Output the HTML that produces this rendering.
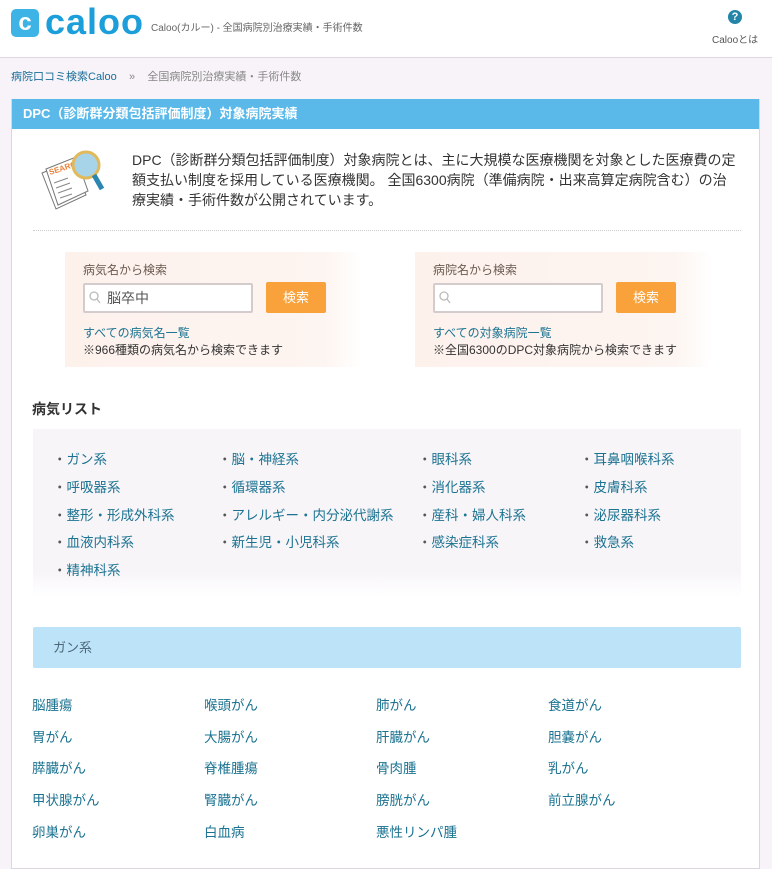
<!DOCTYPE html>
<html><head><meta charset="utf-8">
<style>
*{margin:0;padding:0;box-sizing:border-box}
body{width:772px;height:856px;overflow:hidden;background:#f7f3f8;font-family:"Liberation Sans","Noto Sans CJK JP",sans-serif;color:#333;position:relative}
a{color:#1c7391;text-decoration:none}
.hdr{position:absolute;left:0;top:0;width:772px;height:58px;background:#fff;border-bottom:1px solid #e0d8e0}
.logo{position:absolute;left:11px;top:9px;width:28px;height:28px;background:#3db3e6;border-radius:5px;color:#fff;font:bold 24px/28px "Liberation Sans",sans-serif;text-align:center}
.logot{position:absolute;left:45px;top:2px;font:bold 36px/40px "Liberation Sans",sans-serif;color:#1b9ed9;letter-spacing:1px}
.tag{position:absolute;left:151px;top:19px;font-size:10px;color:#666}
.help{position:absolute;left:728px;top:10px;width:14px;height:14px;border-radius:50%;background:#2386a8;color:#fff;font:bold 11px/14px sans-serif;text-align:center}
.helpt{position:absolute;left:712px;top:31px;font-size:10px;color:#555}
.bc{position:absolute;left:11px;top:68px;font-size:11px;color:#888}
.bc a{color:#1a6f9a}
.box{position:absolute;left:11px;top:99px;width:749px;height:770px;background:#fff;border:1px solid #dcd6e2;border-top:none}
.h1{height:30px;background:#5ab9e8;color:#fff;font-weight:bold;font-size:13px;line-height:30px;padding-left:11px}
.intro{position:absolute;left:120px;top:51px;width:606px;font-size:14px;line-height:20px;color:#333}
.dots{position:absolute;left:21px;top:131px;width:708px;border-top:1px dotted #ccc}
.sb{position:absolute;top:153px;width:296px;height:115px;background:linear-gradient(90deg,#fdf1ec,#fdf5f1 88%,#fff);}
.sb .t{position:absolute;left:18px;top:9px;font-size:12px;color:#6a5a50}
.sb .in{position:absolute;left:18px;top:31px;width:170px;height:30px;border:2px solid #d4cccc;background:#fff;border-radius:2px;font-size:14px;line-height:26px;padding-left:22px;color:#555}
.sb .in svg{position:absolute;left:4px;top:6px}
.sb .btn{position:absolute;left:201px;top:30px;width:60px;height:31px;background:#f9a23b;border-radius:2px;color:#fff;font-size:13px;line-height:31px;text-align:center}
.sb .l{position:absolute;left:18px;top:72px;font-size:12px}
.sb .n{position:absolute;left:18px;top:89px;font-size:12px;color:#333}
.h2{position:absolute;left:20px;top:300px;font-size:14px;font-weight:bold;color:#333}
.cat{position:absolute;left:21px;top:330px;width:708px;height:168px;background:linear-gradient(#f8f5f9,#f8f5f9 85%,#fff)}
.cat a{position:absolute;font-size:13.5px;color:#1c7391}
.cat a:before{content:"・";color:#555;margin-left:-4px}
.gh{position:absolute;left:21px;top:528px;width:708px;height:41px;background:#bde3f8;border-radius:2px;font-size:13px;color:#4a6677;line-height:41px;padding-left:20px}
.gl a{position:absolute;font-size:13.5px;color:#1c7391}
</style></head><body>
<div class="hdr">
<div class="logo">c</div><div class="logot">caloo</div>
<div class="tag">Caloo(カルー) - 全国病院別治療実績・手術件数</div>
<div class="help">?</div><div class="helpt">Calooとは</div>
</div>
<div class="bc"><a>病院口コミ検索Caloo</a>&nbsp;&nbsp;&nbsp; »&nbsp;&nbsp;&nbsp; 全国病院別治療実績・手術件数</div>
<div class="box">
<div class="h1">DPC（診断群分類包括評価制度）対象病院実績</div>
<svg style="position:absolute;left:26px;top:44px" width="72" height="68" viewBox="0 0 72 68">
<path d="M4 30 L34 18 L48 52 L18 66 Z" fill="#fff" stroke="#777"/>
<path d="M8 26 L38 14 L50 48 L20 62 Z" fill="#fff" stroke="#777"/>
<text x="12" y="32" font-size="8" fill="#e8823a" font-weight="bold" transform="rotate(-18 12 32)">SEARC</text>
<path d="M16 40 L30 35 M18 45 L32 40 M20 50 L34 45 M22 55 L34 51" stroke="#888"/>
<circle cx="48" cy="22" r="13" fill="#a8d4ea" stroke="#e1b95a" stroke-width="3"/>
<path d="M56 32 L64 46" stroke="#2b87b0" stroke-width="5"/>
</svg>
<div class="intro">DPC（診断群分類包括評価制度）対象病院とは、主に大規模な医療機関を対象とした医療費の定額支払い制度を採用している医療機関。 全国6300病院（準備病院・出来高算定病院含む）の治療実績・手術件数が公開されています。</div>
<div class="dots"></div>
<div class="sb" style="left:53px"><div class="t">病気名から検索</div>
<div class="in"><svg width="12" height="14"><circle cx="5" cy="5" r="4" fill="none" stroke="#bbb" stroke-width="1.3"/><path d="M8 8 L11 12" stroke="#bbb" stroke-width="1.3"/></svg>脳卒中</div>
<div class="btn">検索</div><a class="l">すべての病気名一覧</a><div class="n">※966種類の病気名から検索できます</div></div>
<div class="sb" style="left:403px"><div class="t">病院名から検索</div>
<div class="in"><svg width="12" height="14"><circle cx="5" cy="5" r="4" fill="none" stroke="#bbb" stroke-width="1.3"/><path d="M8 8 L11 12" stroke="#bbb" stroke-width="1.3"/></svg></div>
<div class="btn">検索</div><a class="l">すべての対象病院一覧</a><div class="n">※全国6300のDPC対象病院から検索できます</div></div>
<div class="h2">病気リスト</div>
<div class="cat">
<a style="left:24px;top:19px">ガン系</a><a style="left:189px;top:19px">脳・神経系</a><a style="left:389px;top:19px">眼科系</a><a style="left:551px;top:19px">耳鼻咽喉科系</a>
<a style="left:24px;top:47px">呼吸器系</a><a style="left:189px;top:47px">循環器系</a><a style="left:389px;top:47px">消化器系</a><a style="left:551px;top:47px">皮膚科系</a>
<a style="left:24px;top:75px">整形・形成外科系</a><a style="left:189px;top:75px">アレルギー・内分泌代謝系</a><a style="left:389px;top:75px">産科・婦人科系</a><a style="left:551px;top:75px">泌尿器科系</a>
<a style="left:24px;top:102px">血液内科系</a><a style="left:189px;top:102px">新生児・小児科系</a><a style="left:389px;top:102px">感染症科系</a><a style="left:551px;top:102px">救急系</a>
<a style="left:24px;top:130px">精神科系</a>
</div>
<div class="gh">ガン系</div>
<div class="gl">
<a style="left:20px;top:595px">脳腫瘍</a><a style="left:192px;top:595px">喉頭がん</a><a style="left:364px;top:595px">肺がん</a><a style="left:536px;top:595px">食道がん</a>
<a style="left:20px;top:627px">胃がん</a><a style="left:192px;top:627px">大腸がん</a><a style="left:364px;top:627px">肝臓がん</a><a style="left:536px;top:627px">胆嚢がん</a>
<a style="left:20px;top:658px">膵臓がん</a><a style="left:192px;top:658px">脊椎腫瘍</a><a style="left:364px;top:658px">骨肉腫</a><a style="left:536px;top:658px">乳がん</a>
<a style="left:20px;top:690px">甲状腺がん</a><a style="left:192px;top:690px">腎臓がん</a><a style="left:364px;top:690px">膀胱がん</a><a style="left:536px;top:690px">前立腺がん</a>
<a style="left:20px;top:722px">卵巣がん</a><a style="left:192px;top:722px">白血病</a><a style="left:364px;top:722px">悪性リンパ腫</a>
</div>
</div>
</body></html>
